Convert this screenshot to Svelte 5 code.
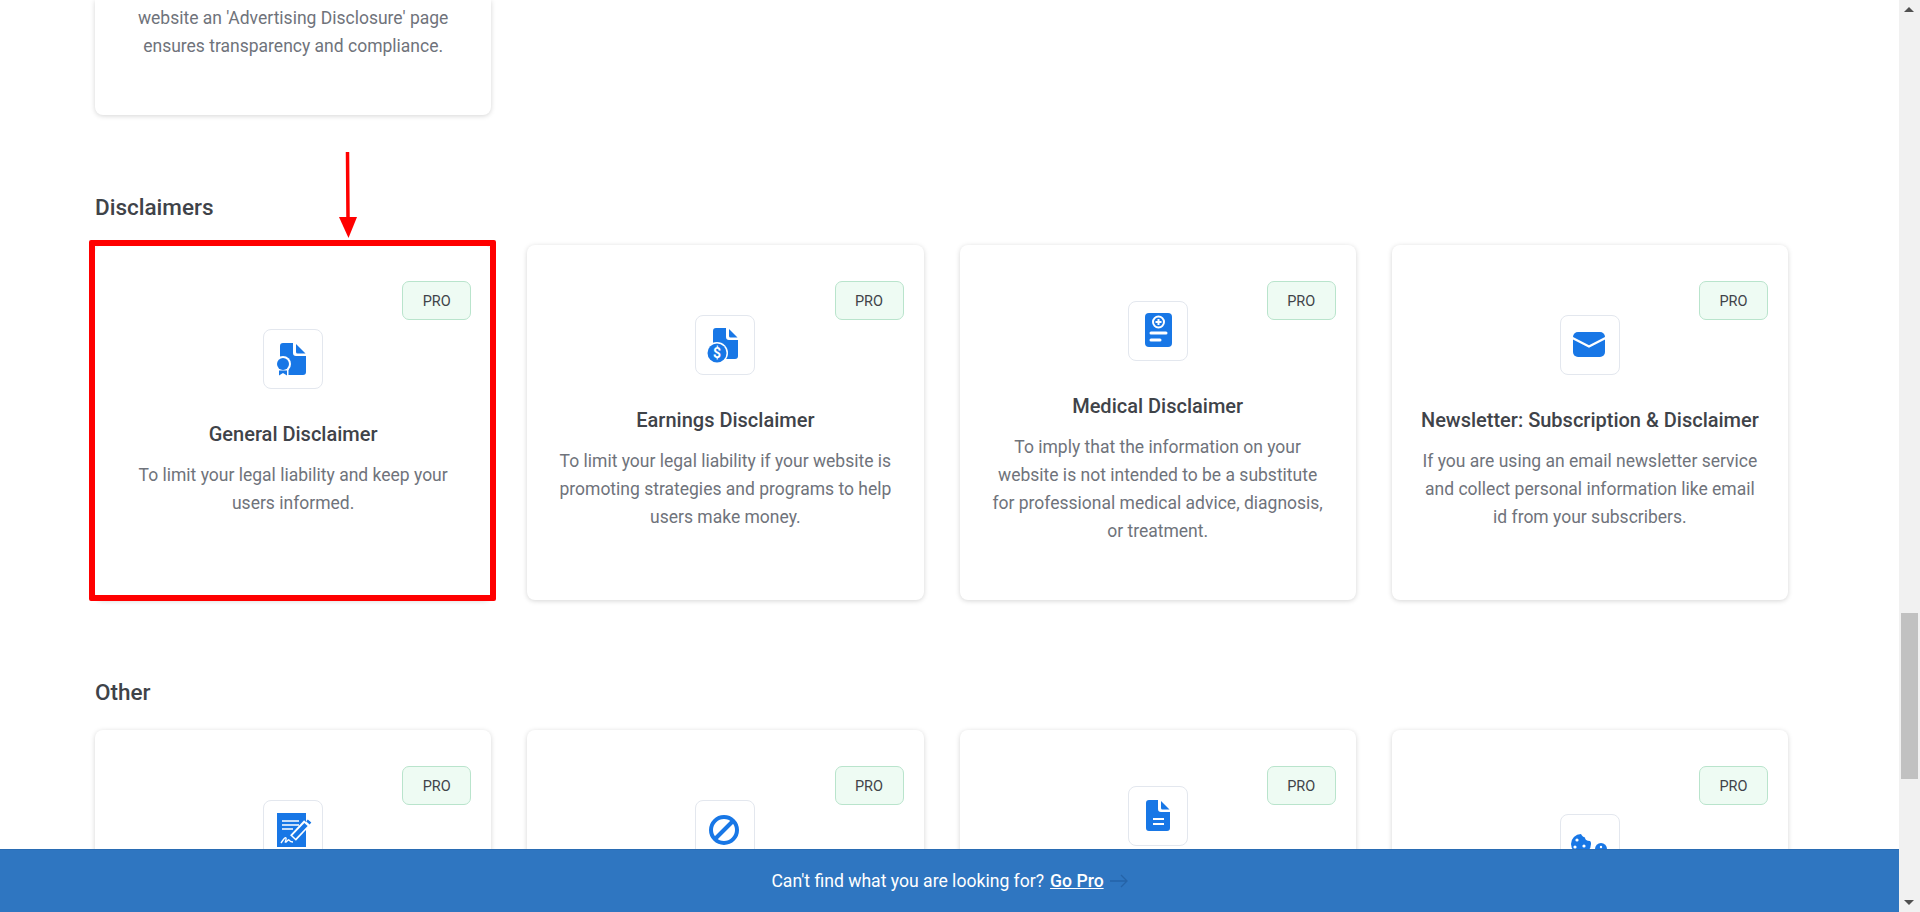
<script>
    const disclaimers = [
        { icon: "general", title: "General Disclaimer", desc: "To limit your legal liability and keep your users informed.", marked: true },
        { icon: "earnings", title: "Earnings Disclaimer", desc: "To limit your legal liability if your website is promoting strategies and programs to help users make money." },
        { icon: "medical", title: "Medical Disclaimer", desc: "To imply that the information on your website is not intended to be a substitute for professional medical advice, diagnosis, or treatment." },
        { icon: "mail", title: "Newsletter: Subscription & Disclaimer", desc: "If you are using an email newsletter service and collect personal information like email id from your subscribers." },
    ];

    // the lower half of this row sits behind the banner
    const other = [
        { icon: "terms", title: "Terms of Service", desc: "To set the rules that visitors must agree to before they use your website and the services that you provide." },
        { icon: "ban", title: "Acceptable Use Policy", desc: "To describe what users may not do on your website and how you will act if those rules are ever broken." },
        { icon: "doc", title: "End User License Agreement", desc: "To set out how users may install and use your software or app, what they may not do with it, and what happens if the license is ended." },
        { icon: "cookie", title: "Cookie Policy", desc: "To tell visitors which cookies your website uses and why it uses them." },
    ];
</script>

{#snippet glyph(name)}
    <svg viewBox="0 0 60 60" width="60" height="60" fill="#1877e6">
        {#if name === "general"}
            <path d="M20 14h10v10a3 3 0 0 0 3 3h10v16a3 3 0 0 1-3 3H20a3 3 0 0 1-3-3V17a3 3 0 0 1 3-3z" />
            <path d="M33 15l9.500 9.500h-8a1.500 1.500 0 0 1-1.500-1.500z" />
            <circle cx="20" cy="35" r="8" fill="#fff" />
            <path d="M14.500 40h11v7h-11z" fill="#fff" />
            <circle cx="20" cy="35" r="6" />
            <path d="M16 41.500h8v5l-4-2.500-4 2.500z" />
        {:else if name === "earnings"}
            <path d="M21 13h10v9a3 3 0 0 0 3 3h9v16a3 3 0 0 1-3 3H21a3 3 0 0 1-3-3V16a3 3 0 0 1 3-3z" />
            <path d="M34 14l8.500 8.500h-7a1.500 1.500 0 0 1-1.500-1.500z" />
            <circle cx="22" cy="38" r="11" fill="#fff" />
            <circle cx="22" cy="38" r="9.500" />
            <text x="22" y="43" class="dollar">$</text>
        {:else if name === "medical"}
            <rect x="17" y="12" width="27" height="34" rx="4" />
            <circle cx="30.500" cy="21" r="5.500" fill="none" stroke="#fff" stroke-width="2" />
            <path d="M30.500 18v6M27.500 21h6" stroke="#fff" stroke-width="2" fill="none" />
            <path d="M23 32h15M23 39h9" stroke="#fff" stroke-width="3" stroke-linecap="round" fill="none" />
        {:else if name === "mail"}
            <rect x="13" y="17" width="32" height="25" rx="5" />
            <path d="M12.500 23l16.500 8.500L45.500 23" stroke="#fff" stroke-width="2.400" fill="none" />
        {:else if name === "terms"}
            <rect x="14" y="13" width="29" height="34" />
            <path d="M19 21h17M19 25h17M19 29h11" stroke="#fff" stroke-width="1.600" fill="none" />
            <path d="M30 38l14-15" stroke="#fff" stroke-width="8" fill="none" />
            <path d="M31 37l12-12.500" stroke="#1877e6" stroke-width="4.500" fill="none" />
            <path d="M44 20.500l3.500 3" stroke="#1877e6" stroke-width="2.500" fill="none" />
            <path d="M18 43c2-3 4-6 5-5s-2 5 0 4 2-3 3-2 1 2 4 2" stroke="#fff" stroke-width="1.400" fill="none" />
        {:else if name === "ban"}
            <circle cx="29" cy="30" r="13" fill="none" stroke="#1877e6" stroke-width="4" />
            <path d="M20 39l18-18" stroke="#1877e6" stroke-width="4" fill="none" />
        {:else if name === "doc"}
            <path d="M21 14h9v9a3 3 0 0 0 3 3h9v16a3 3 0 0 1-3 3H21a3 3 0 0 1-3-3V17a3 3 0 0 1 3-3z" />
            <path d="M33 15l8.500 8.500h-7a1.500 1.500 0 0 1-1.500-1.500z" />
            <path d="M25 33h11M25 38h11" stroke="#fff" stroke-width="2" fill="none" />
        {:else if name === "cookie"}
            <path d="M21 20c1 2 2 3 4 3.500 0 2 1.500 3.500 5 3.500 1 1 1 2 1 3a10 10 0 1 1-10-10z" />
            <circle cx="17" cy="26" r="1.600" fill="#fff" />
            <circle cx="24" cy="32" r="1.600" fill="#fff" />
            <circle cx="15" cy="33" r="1.600" fill="#fff" />
            <circle cx="41" cy="35" r="6" />
            <circle cx="41" cy="33" r="1.200" fill="#fff" />
        {/if}
    </svg>
{/snippet}

{#snippet card(item)}
    <div class="card">
        <span class="pro">PRO</span>
        <div class="icon-box">{@render glyph(item.icon)}</div>
        <h3>{item.title}</h3>
        <p>{item.desc}</p>
        {#if item.marked}
            <div class="marker"></div>
        {/if}
    </div>
{/snippet}

<div class="page">
    <main>
        <div class="grid">
            <div class="card cropped">
                <p>website an 'Advertising Disclosure' page ensures transparency and compliance.</p>
            </div>
        </div>

        <h2>Disclaimers</h2>
        <div class="grid">
            {#each disclaimers as item}
                {@render card(item)}
            {/each}
        </div>

        <h2>Other</h2>
        <div class="grid">
            {#each other as item}
                {@render card(item)}
            {/each}
        </div>

        <svg class="arrow" viewBox="0 0 24 86" width="24" height="86">
            <path d="M10.500 0.500l0.500 66" stroke="#f00" stroke-width="3.500" stroke-linecap="round" fill="none" />
            <path d="M2 65h18l-8.500 21z" fill="#f00" />
        </svg>

        <div class="banner">
            <span>Can't find what you are looking for?</span>
            <a href="#pro">Go Pro</a>
            <svg viewBox="0 0 18 14" width="18" height="14" fill="none" stroke="#2563a8" stroke-width="1.300">
                <path d="M0 7h17M11 1l6 6-6 6" />
            </svg>
        </div>
    </main>

    <div class="scrollbar">
        <i class="up"></i>
        <div class="thumb"></div>
        <i class="down"></i>
    </div>
</div>

<style>
    :global(body) {
        margin: 0;
        background: #fff;
        overflow: hidden;
    }

    .page {
        display: flex;
        height: 912px;
        overflow: hidden;
        font-family: Roboto, "Liberation Sans", sans-serif;
    }

    main {
        position: relative;
        flex: 1;
        overflow: hidden;
        padding: 0 111px 0 95px;
    }

    .grid {
        display: grid;
        grid-template-columns: repeat(4, minmax(0, 1fr));
        gap: 36px;
    }

    h2 {
        margin: 78px 0 24px;
        font-size: 22.500px;
        line-height: 28px;
        font-weight: 500;
        color: #3f4349;
    }

    .card {
        position: relative;
        box-sizing: border-box;
        height: 355px;
        padding: 0 30px;
        display: flex;
        flex-direction: column;
        align-items: center;
        justify-content: center;
        text-align: center;
        background: #fff;
        border-radius: 8px;
        box-shadow: 0 1px 5px rgba(0, 0, 0, 0.17);
    }

    .card.cropped {
        height: 115px;
        justify-content: flex-end;
        padding-bottom: 55px;
        border-radius: 0 0 8px 8px;
    }

    .pro {
        position: absolute;
        top: 36px;
        right: 20px;
        box-sizing: border-box;
        width: 69px;
        height: 39px;
        padding-top: 1px;
        display: flex;
        align-items: center;
        justify-content: center;
        font-size: 14.500px;
        color: #3f4349;
        background: #eefbf3;
        border: 1px solid #b9e4cc;
        border-radius: 7px;
    }

    .icon-box {
        box-sizing: border-box;
        width: 60px;
        height: 60px;
        border: 1px solid #e3e7ee;
        border-radius: 8px;
        background: #fff;
    }

    .icon-box svg {
        display: block;
        margin: -1px;
    }

    .dollar {
        font-family: Roboto, sans-serif;
        font-size: 14px;
        font-weight: 700;
        fill: #fff;
        text-anchor: middle;
    }

    h3 {
        margin: 31px 0 13px;
        font-size: 20px;
        line-height: 28px;
        font-weight: 500;
        white-space: nowrap;
        color: #3f4349;
    }

    p {
        margin: 0;
        font-size: 17.500px;
        line-height: 28px;
        color: #6f737b;
    }

    .marker {
        position: absolute;
        inset: -5px -5px -1px -6px;
        border: 6px solid #f00;
        border-radius: 2px;
    }

    .arrow {
        position: absolute;
        left: 337px;
        top: 152px;
    }

    .banner {
        position: absolute;
        left: 0;
        right: 0;
        bottom: 0;
        height: 63px;
        display: flex;
        align-items: center;
        justify-content: center;
        gap: 6px;
        font-size: 17.600px;
        color: #fff;
        background: #2f76c1;
        border-top: 1px solid #2a6cb3;
        box-sizing: border-box;
    }

    .banner a {
        color: #fff;
        font-weight: 500;
        text-decoration: underline;
    }

    .scrollbar {
        position: relative;
        flex: none;
        width: 21px;
        background: #f1f1f1;
    }

    .thumb {
        margin: 613px 2px 0;
        height: 166px;
        background: #c1c1c1;
    }

    .up,
    .down {
        position: absolute;
        left: 5px;
        width: 0;
        height: 0;
        border-left: 5px solid transparent;
        border-right: 5px solid transparent;
    }

    .up {
        top: 7px;
        border-bottom: 5px solid #505050;
    }

    .down {
        bottom: 7px;
        border-top: 5px solid #505050;
    }
</style>
